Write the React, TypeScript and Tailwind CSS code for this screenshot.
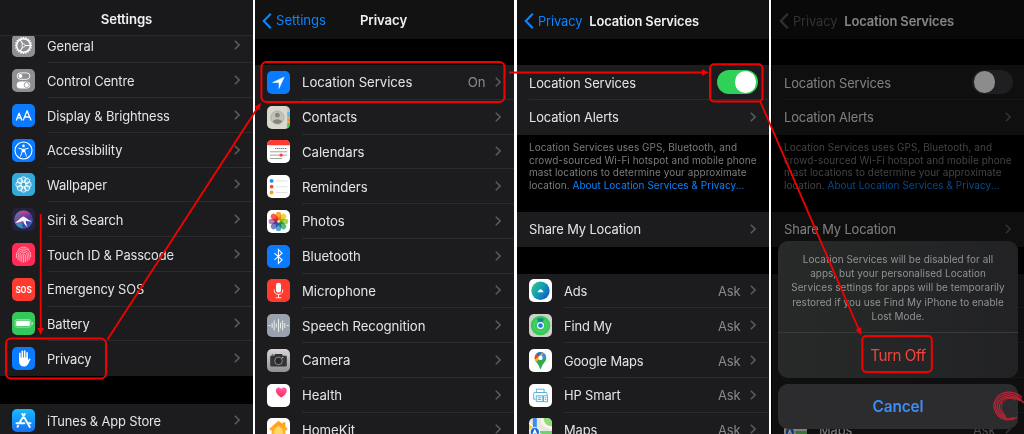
import type { ReactNode } from 'react';
import clsx from 'clsx';

interface RowProps {
  label: string;
  icon?: ReactNode;
  value?: string;
  last?: boolean;
  control?: ReactNode;
}

function Chevron() {
  return (
    <svg className="w-[6px] h-[10px] shrink-0" viewBox="0 0 6 10" fill="none" stroke="#5c5c60" strokeWidth="1.5">
      <path d="M.8.7 5.1 5 .8 9.3" />
    </svg>
  );
}

function Row({ label, icon, value, last, control }: RowProps) {
  return (
    <div className="flex h-[34.75px] shrink-0 items-stretch bg-[#1c1c1e] pl-3">
      {icon && <div className="flex w-[35px] shrink-0 items-center">{icon}</div>}
      <div className={clsx('flex flex-1 items-center border-b pr-[13.5px]', last ? 'border-transparent' : 'border-[#2b2b2d]')}>
        <span className="flex-1 whitespace-nowrap pt-[3px] text-[#e4e4e6]">{label}</span>
        {value && <span className="mr-[9px] pt-[3px] text-[#8a8a8e]">{value}</span>}
        {control || <Chevron />}
      </div>
    </div>
  );
}

function Tile({ bg, children }: { bg: string; children: ReactNode }) {
  return (
    <svg className={clsx('h-[23px] w-[23px] overflow-hidden rounded-[5px]', bg)} viewBox="0 0 23 23" fill="none">
      {children}
    </svg>
  );
}

const teeth = Array.from({ length: 20 }, (_, i) => i * 18);
const petals = ['#f99b1c', '#e8d31a', '#a3cc3a', '#3fb36b', '#3d9bd0', '#6a6fc0', '#b668ae', '#ee4c3c'];

const icons = {
  general: (
    <Tile bg="bg-[#8e8e93]">
      <g stroke="#fff">
        <circle cx="11.5" cy="11.5" r="6.8" strokeWidth="1.4" />
        {teeth.map((a) => (
          <path key={a} d="M11.5 2.9v1.6" strokeWidth="1.3" transform={`rotate(${a} 11.5 11.5)`} />
        ))}
        <circle cx="11.5" cy="11.5" r="1.6" strokeWidth=".9" />
        <path d="M13.1 11.5h5M10.7 10.1 8.2 5.8M10.7 12.9l-2.5 4.3" strokeWidth="1.1" />
      </g>
    </Tile>
  ),
  control: (
    <Tile bg="bg-[#8e8e93]">
      <rect x="5.1" y="3.9" width="12.8" height="6.4" rx="3.2" stroke="#fff" strokeWidth=".9" />
      <circle cx="8.4" cy="7.1" r="2" fill="#fff" />
      <rect x="4.7" y="12.4" width="13.6" height="7.2" rx="3.6" fill="#fff" />
      <circle cx="14.7" cy="16" r="2.6" fill="#fff" stroke="#8e8e93" strokeWidth=".8" />
    </Tile>
  ),
  display: (
    <Tile bg="bg-[#0a7aff]">
      <g stroke="#fff" strokeWidth="1.3" strokeLinecap="round" strokeLinejoin="round">
        <path d="m4.4 16 2.7-6.8L9.8 16M5.3 13.8h3.6M11.3 16l3.8-9.3L18.9 16M12.6 13h5" />
      </g>
    </Tile>
  ),
  accessibility: (
    <Tile bg="bg-[#0a7aff]">
      <circle cx="11.5" cy="11.5" r="8.5" stroke="#fff" strokeWidth="1.1" />
      <circle cx="11.5" cy="6.9" r="1.3" fill="#fff" />
      <path d="m6.8 9.3 3.3.8v2.7l-1.5 4.3M16.2 9.3l-3.3.8v2.7l1.5 4.3" stroke="#fff" strokeWidth="1" strokeLinecap="round" strokeLinejoin="round" />
      <path d="M10 9.7h3v3.5h-3z" fill="#fff" />
    </Tile>
  ),
  wallpaper: (
    <Tile bg="bg-[#34aadc]">
      <g stroke="#fff" strokeWidth=".85">
        {petals.map((p, i) => (
          <circle key={p} cx="11.5" cy="6.4" r="2.6" fill="#fff" fillOpacity=".15" transform={`rotate(${i * 45} 11.5 11.5)`} />
        ))}
        <circle cx="11.5" cy="11.5" r="2.3" />
      </g>
    </Tile>
  ),
  siri: (
    <Tile bg="bg-[#23233c]">
      <defs>
        <linearGradient id="siri" x1="0" y1="0" x2="1" y2="1">
          <stop offset="0" stopColor="#2b9bb0" />
          <stop offset=".4" stopColor="#8a3d94" />
          <stop offset=".65" stopColor="#4438a0" />
          <stop offset="1" stopColor="#2390c8" />
        </linearGradient>
      </defs>
      <circle cx="11.5" cy="11.5" r="9.3" fill="url(#siri)" />
      <path d="M4.5 6.500C8 1.500 15 1.800 18.200 6.500c-3-1.500-9-2-13.700 0z" fill="#d63d8b" fillOpacity=".75" />
      <path d="M2.8 14.500C6 13.500 8 9.500 11.500 8.500c2.500.8 4.500 3.800 8.300 4.800-2.500.5-4.500 0-6-.6.2 2.300.7 4.300 1.800 6-2.600-1-4-3.200-4.500-5.600-2 .8-4.800 2-8.300 1.400z" fill="#f3f4fc" />
      <path d="M3 15c2 3.500 4.500 5 8 5.500-.5-2-.5-4-.6-6.200-2 .7-4.400 1.500-7.400.7z" fill="#22b5c9" fillOpacity=".7" />
    </Tile>
  ),
  touchId: (
    <Tile bg="bg-[#ff2d55]">
      <g stroke="#ffc3cf" strokeWidth=".85" strokeLinecap="round">
        <path d="M6 6.700c3.200-3.500 8-3.500 11.100 0M4.400 11.500c.4-7.300 13.800-7.800 14.300 0v2.300M4.400 11.500v3M6.200 16.800v-5c.2-5.400 10.400-5.600 10.800 0v4.700M8 18v-6.200c.1-3.300 7-3.500 7.200 0V18M9.800 18.800v-6.600c.1-1.700 3.400-1.700 3.500 0v6.600M11.600 12.200v7" />
      </g>
    </Tile>
  ),
  battery: (
    <Tile bg="bg-[#34c759]">
      <rect x="3" y="7.6" width="16" height="7.6" rx="1.9" stroke="#a9e6b9" strokeWidth=".8" />
      <rect x="4.2" y="8.8" width="13.6" height="5.2" rx=".8" fill="#fff" />
      <path d="M20.3 10.200v2.400" stroke="#c9efd2" strokeWidth="1.1" />
    </Tile>
  ),
  privacy: (
    <Tile bg="bg-[#0a7aff]">
      <g stroke="#fff" strokeWidth="1.6" strokeLinecap="round">
        <path d="M7.900 12V6.200M10.300 11V4.300M12.700 11V4.100M15.100 12V5.700" />
      </g>
      <path d="M7.100 10.500h8.800v2.900l1-1.500c.7-.9 1.900-.4 1.500.6l-2.200 4.300c-.9 1.900-2.200 2.800-4.300 2.800-3.200 0-4.800-2.100-4.800-5z" fill="#fff" />
    </Tile>
  ),
  appStore: (
    <Tile bg="bg-linear-to-b from-[#1fb9fa] to-[#1a6ff0]">
      <g stroke="#fff" strokeWidth="1.9" strokeLinecap="round">
        <path d="m10.300 5 5.900 10.200M12.800 5 7.300 14.300M4.500 14.300h7.800M15.600 14.300h2.900M6.100 16.700l-.6 1M16.800 16.300l1 1.700" />
      </g>
    </Tile>
  ),
  location: (
    <Tile bg="bg-[#0a7aff]">
      <path d="M17.200 6 12 17.400v-5.900H5.700z" fill="#fff" stroke="#fff" strokeWidth=".5" strokeLinejoin="round" />
    </Tile>
  ),
  contacts: (
    <Tile bg="bg-[#d9d8ce]">
      <circle cx="10.4" cy="11.5" r="6.6" fill="#c4c2b8" stroke="#aaa9a1" strokeWidth=".8" />
      <circle cx="10.4" cy="9.2" r="2.4" fill="#85847e" />
      <path d="M5.700 15.800c.9-3.500 8.500-3.500 9.400 0a6.300 6.300 0 0 1-9.400 0z" fill="#85847e" />
      <path d="M20.200 0H23v6h-2.800z" fill="#c4c4be" />
      <path d="M20.200 6H23v5h-2.800z" fill="#5db8ea" />
      <path d="M20.200 11.500H23v5h-2.800z" fill="#ff9417" />
      <path d="M20.200 17H23v6h-2.800z" fill="#42c74c" />
    </Tile>
  ),
  calendar: (
    <Tile bg="bg-white">
      <path d="M0 0h23v5.200H0z" fill="#ff3b30" />
      <g stroke="#555" strokeWidth=".9" strokeDasharray="1.2 .8">
        <path d="M8.200 8.500h12M3.400 11.800h16.800M3.400 15.100h16.800M3.400 18.500h12" />
      </g>
      <circle cx="14.1" cy="15.1" r="1.7" fill="#ff3b30" />
    </Tile>
  ),
  reminders: (
    <Tile bg="bg-white">
      <circle cx="4.6" cy="5.9" r="1.9" fill="#1f87ff" />
      <circle cx="4.6" cy="11.7" r="1.9" fill="#ff453a" />
      <circle cx="4.6" cy="17.5" r="1.9" fill="#ff9f0a" />
      <path d="M8.800 5.900h11.500M8.800 11.700h11.500M8.800 17.500h11.500" stroke="#d4d4d6" strokeWidth=".7" />
    </Tile>
  ),
  photos: (
    <Tile bg="bg-white">
      {petals.map((fill, i) => (
        <rect key={fill} x="8.8" y="1.7" width="5.4" height="8.8" rx="2.7" fill={fill} fillOpacity=".88" transform={`rotate(${i * 45} 11.5 11.5)`} className="mix-blend-multiply" />
      ))}
    </Tile>
  ),
  bluetooth: (
    <Tile bg="bg-[#0a7aff]">
      <path d="m7.400 8.200 7.700 6.600-3.700 3.600V4.600l3.700 3.600-7.700 6.600" stroke="#fff" strokeWidth="1.1" />
    </Tile>
  ),
  microphone: (
    <Tile bg="bg-[#ff3b30]">
      <rect x="9" y="3.8" width="5" height="9.6" rx="2.5" fill="#fff" />
      <path d="M7.300 10.500v1.200c0 5 8.400 5 8.400 0v-1.200M11.500 15.500v3M8.700 18.700h5.600" stroke="#fff" strokeWidth=".9" />
    </Tile>
  ),
  speech: (
    <Tile bg="bg-[#9aa2ad]">
      <path d="M1.500 11.500h2M5.100 9v5M7.200 6.500v10M9.300 9.500v4M11.500 5v13M13.600 8.500v6M15.700 6.500v10M17.800 9v5M19.800 11.500h2" stroke="#eceef1" strokeWidth="1" />
    </Tile>
  ),
  camera: (
    <Tile bg="bg-linear-to-b from-[#d6d6d9] to-[#8f8f94]">
      <path d="M3.200 8c0-.8.500-1.200 1.200-1.200h2.700l1-1.700h6.800l1 1.700h2.700c.8 0 1.200.4 1.200 1.200v8.200c0 .8-.4 1.200-1.200 1.200H4.400c-.8 0-1.200-.4-1.200-1.200z" fill="#343438" />
      <path d="M4.700 5.400h1.900v1H4.700z" fill="#343438" />
      <circle cx="11.5" cy="11.9" r="3.8" fill="#28282b" stroke="#929298" strokeWidth=".9" />
      <circle cx="15.8" cy="8.5" r=".7" fill="#f8c51c" />
    </Tile>
  ),
  health: (
    <Tile bg="bg-white">
      <defs>
        <linearGradient id="heart" x1="0" y1="0" x2="0" y2="1">
          <stop offset="0" stopColor="#ff5fae" />
          <stop offset="1" stopColor="#ff2748" />
        </linearGradient>
      </defs>
      <path d="M14.300 13.600C6.500 8.800 8.300 3.600 11.600 3.600c1.300 0 2.200.6 2.700 1.500.5-.9 1.400-1.500 2.700-1.500 3.300 0 5.100 5.200-2.700 10z" fill="url(#heart)" />
    </Tile>
  ),
  homekit: (
    <Tile bg="bg-white">
      <defs>
        <linearGradient id="home" x1="0" y1="0" x2="0" y2="1">
          <stop offset="0" stopColor="#ff9a0b" />
          <stop offset="1" stopColor="#ffc93c" />
        </linearGradient>
      </defs>
      <path d="M11.500 3.200 3 10.600v1.200h2V19h13v-7.200h2v-1.200l-2-1.800V4.800h-2.200v2z" fill="url(#home)" stroke="#fb9a1b" strokeWidth=".7" strokeLinejoin="round" />
      <path d="m11.500 7.800-4 3.500v5.200h8v-5.200z" fill="#ffd66b" />
    </Tile>
  ),
  ads: (
    <Tile bg="bg-white">
      <defs>
        <linearGradient id="ads" x1="0" y1=".1" x2="1" y2=".8">
          <stop offset="0" stopColor="#35c786" />
          <stop offset=".5" stopColor="#119cb4" />
          <stop offset="1" stopColor="#1458c9" />
        </linearGradient>
      </defs>
      <circle cx="11.5" cy="11.7" r="9.2" fill="url(#ads)" />
      <path d="M8.500 13.200c1-1.700 2-3 3.100-3s2 1.300 3 3z" fill="#fff" />
    </Tile>
  ),
  findMy: (
    <Tile bg="bg-[#cfd1cf]">
      <circle cx="11.5" cy="11.5" r="9.8" fill="#35cb55" />
      <circle cx="11.5" cy="11.5" r="6.3" stroke="#5fe07a" strokeWidth=".6" />
      <path d="M8 4.700c2.300-1 4.700-1 7 0L13.300 9H9.700z" fill="#168a8f" />
      <circle cx="11.5" cy="11.5" r="3.5" fill="#fff" />
      <circle cx="11.5" cy="11.5" r="2.3" fill="#1a72f5" />
    </Tile>
  ),
  googleMaps: (
    <Tile bg="bg-white">
      <path d="M11.500 20c-.9 0-.8-2.300-2.200-4.300-1.300-1.900-3.600-3.700-3.600-6.800a5.800 5.800 0 0 1 11.600 0c0 3.100-2.300 4.900-3.600 6.800-1.400 2-1.300 4.300-2.200 4.300z" fill="#34a853" />
      <path d="m7.100 12.900 8.700-8.200A5.800 5.800 0 0 0 7 5.200L5.700 8.900c0 1.600.6 2.900 1.400 4z" fill="#fbbc04" />
      <path d="m7.100 5.100 3 2.500-4.200 2.900c-.5-2-.1-3.800 1.200-5.400z" fill="#ea4335" />
      <path d="M7.100 5.100a5.800 5.800 0 0 1 6.200-1.700L9.700 7.600z" fill="#1a73e8" />
      <path d="M13.300 3.400c1.700.5 3 1.700 3.600 3.300l-5.200 5.800 1.500-5z" fill="#4285f4" />
      <circle cx="11.5" cy="8.9" r="2.2" fill="#fff" />
    </Tile>
  ),
  hpSmart: (
    <Tile bg="bg-white">
      <g stroke="#45abd2" strokeWidth=".9">
        <path d="M7.400 8.500V5.200h7.700v3.300M6.500 15.200H4.700V9.300c0-.5.3-.8.800-.8h11.700c.5 0 .8.300.8.800v1.700M7.300 11.800h6.500v5.800H7.300zM14.500 11.800h4v6h-4zM8.800 13.700h3.400M8.800 15.500h3.400M15.800 13.800h1.500M15.800 15.600h1.500" />
      </g>
    </Tile>
  ),
  maps: (
    <Tile bg="bg-[#e9e7d7]">
      <path d="M12 0h11v11C16 11 12 6 12 0z" fill="#90dc79" />
      <path d="M13 0c0 6 4 9.800 10 9.800" stroke="#f6f6ef" strokeWidth="3" />
      <path d="M0 4.500 23 20v3h-8L0 13z" fill="#fff" />
      <path d="M0 6v5l14 12h5z" fill="#fccc2d" />
      <path d="M11 15l12 8V13H11z" fill="#72cf6f" />
      <path d="M3.800 0h4v23h-4z" fill="#3e8cf3" />
      <circle cx="5.8" cy="14" r="4.7" fill="#1d6ce0" stroke="#fff" strokeWidth=".9" />
      <path d="m5.800 10.600 2.600 6.100-2.600-1.400-2.600 1.400z" fill="#fff" />
    </Tile>
  ),
};

const sosIcon = (
  <span className="flex h-[23px] w-[23px] items-center justify-center rounded-[5px] bg-[#ff3b30] pt-px font-['Roboto',sans-serif] text-[8.5px] font-bold tracking-[-0.1px] text-white">
    SOS
  </span>
);

const settingsRows = [
  { label: 'General', icon: icons.general },
  { label: 'Control Centre', icon: icons.control },
  { label: 'Display & Brightness', icon: icons.display },
  { label: 'Accessibility', icon: icons.accessibility },
  { label: 'Wallpaper', icon: icons.wallpaper },
  { label: 'Siri & Search', icon: icons.siri },
  { label: 'Touch ID & Passcode', icon: icons.touchId },
  { label: 'Emergency SOS', icon: sosIcon },
  { label: 'Battery', icon: icons.battery },
  { label: 'Privacy', icon: icons.privacy, last: true },
];

const privacyRows = [
  { label: 'Location Services', icon: icons.location, value: 'On' },
  { label: 'Contacts', icon: icons.contacts },
  { label: 'Calendars', icon: icons.calendar },
  { label: 'Reminders', icon: icons.reminders },
  { label: 'Photos', icon: icons.photos },
  { label: 'Bluetooth', icon: icons.bluetooth },
  { label: 'Microphone', icon: icons.microphone },
  { label: 'Speech Recognition', icon: icons.speech },
  { label: 'Camera', icon: icons.camera },
  { label: 'Health', icon: icons.health },
  { label: 'HomeKit', icon: icons.homekit },
];

const appRows = [
  { label: 'Ads', icon: icons.ads },
  { label: 'Find My', icon: icons.findMy },
  { label: 'Google Maps', icon: icons.googleMaps },
  { label: 'HP Smart', icon: icons.hpSmart },
  { label: 'Maps', icon: icons.maps },
];

function BackHeader({ back, title, grey, className }: { back: string; title: string; grey?: boolean; className?: string }) {
  return (
    <div className={clsx('flex h-[38.5px] shrink-0 items-center bg-[#121213] pt-[4px]', className)}>
      <div className={clsx('flex items-center gap-[4px]', grey ? 'text-[#5a5a5c]' : 'text-[#0a84ff]')}>
        <svg className="h-[16px] w-[10px]" viewBox="0 0 10 16" fill="none" stroke="currentColor" strokeWidth="2.2">
          <path d="M8.800.8 1.800 8l7 7.200" />
        </svg>
        <span>{back}</span>
      </div>
      <span className="whitespace-nowrap font-semibold text-[#f0f0f2]">{title}</span>
    </div>
  );
}

function Toggle({ on }: { on?: boolean }) {
  return (
    <div className={clsx('-mr-[2px] flex h-[24.5px] w-[40.5px] items-center rounded-full px-[1.5px]', on ? 'justify-end bg-[#30d158]' : 'bg-[#39393d]')}>
      <div className="h-[21.5px] w-[21.5px] rounded-full bg-white" />
    </div>
  );
}

function LocationServices({ on }: { on?: boolean }) {
  return (
    <>
      <BackHeader back="Privacy" title="Location Services" grey={!on} className="gap-[7px] pl-[7px]" />
      <div className="h-[26.5px] shrink-0" />
      <Row label="Location Services" control={<Toggle on={on} />} />
      <Row label="Location Alerts" last />
      <p className="h-[77.3px] shrink-0 whitespace-nowrap pl-3 pt-[6.5px] text-[9.95px] leading-[12.6px] tracking-[0.06px] text-[#7c7c80]">
        Location Services uses GPS, Bluetooth, and
        <br />
        crowd-sourced Wi-Fi hotspot and mobile phone
        <br />
        mast locations to determine your approximate
        <br />
        location. <span className="text-[#0a84ff]">About Location Services &amp; Privacy...</span>
      </p>
      <Row label="Share My Location" last />
      <div className="h-[27px] shrink-0" />
      {appRows.map((row) => (
        <Row key={row.label} {...row} value="Ask" />
      ))}
    </>
  );
}

// red boxes and arrows that walk through the steps
function Annotations() {
  return (
    <svg className="pointer-events-none absolute inset-0 h-[434px] w-[1024px]" viewBox="0 0 1024 434" fill="none">
      <g stroke="#f50000" strokeWidth="2">
        <rect x="6" y="338.6" width="100" height="40" rx="5" />
        <rect x="261.4" y="62" width="243" height="40" rx="5" />
        <rect x="710" y="64.2" width="52.5" height="37.3" rx="4" />
        <rect x="862.3" y="336" width="69.5" height="36" rx="4" />
        <path d="M40.700 214v116M107.500 339.500 257.600 107.800M509 72.500h194M760.500 102l98.300 227.500" strokeWidth="1.8" />
      </g>
      <g fill="#f50000">
        <path d="M37.500 328h6.400l-3.200 7z" />
        <path d="m261 102.800-1.300 7.500-5.200-3.400z" />
        <path d="M702 69.300v6.400l7-3.200z" />
        <path d="m861.200 335-5.600-5.200 5.700-2.500z" />
      </g>
    </svg>
  );
}

function SwirlLogo() {
  return (
    <svg className="absolute left-[221px] top-[390px] h-[32px] w-[32px]" viewBox="0 0 32 32" fill="none" stroke="#b82433" strokeLinecap="round">
      <path d="M29.500 7C22 .2 9 .2 3.500 9.500c-4.500 8.800 1.500 18.700 11 20.300 3.800.6 7.500-.3 10-2.300" strokeWidth="1.2" />
      <path d="M29 9.200C22 2 10.500 2 5.200 10c-4.500 8 .8 17 9.300 18.500 3 .4 5.500 0 7.500-1" strokeWidth="1.2" />
      <path d="M31.500 12.500C23 3.800 12 4 7 10.800c-4.300 7 .3 14.700 7 16.500" strokeWidth="1.3" />
      <path d="M27.500 10.500C20.500 5.500 12.500 6 8.800 11.800c-3.300 5.700-.5 11.700 4.200 14" strokeWidth="1.3" />
      <path d="M23.500 10C18.500 7 13 8 10.300 13c-2.300 4.500-.7 8.500 2 11" strokeWidth="1" />
    </svg>
  );
}

export default function App() {
  return (
    <div className="relative flex h-[434px] w-[1024px] overflow-hidden bg-white font-['Inter',sans-serif] text-[12.9px] leading-[1.2] tracking-[-0.12px]">
      <div className="flex w-[253px] shrink-0 flex-col overflow-hidden bg-black">
        <div className="flex h-[36px] shrink-0 items-center justify-center border-b border-[#29292b] bg-[#19191b] pt-[4px]">
          <span className="text-[13.2px] font-semibold text-[#f0f0f2]">Settings</span>
        </div>
        {/* scrolled list, first row is cut by the header */}
        <div className="flex h-[340px] shrink-0 flex-col justify-end overflow-hidden">
          {settingsRows.map((row) => (
            <Row key={row.label} {...row} />
          ))}
        </div>
        <div className="h-[27.5px] shrink-0" />
        <Row label="iTunes & App Store" icon={icons.appStore} />
      </div>

      <div className="ml-[2px] flex w-[259px] shrink-0 flex-col overflow-hidden bg-black text-[13.2px] tracking-[-0.07px]">
        <BackHeader back="Settings" title="Privacy" className="gap-[34px] pl-[7px]" />
        <div className="h-[26.5px] shrink-0" />
        {privacyRows.map((row) => (
          <Row key={row.label} {...row} />
        ))}
      </div>

      <div className="ml-[3px] flex w-[252px] shrink-0 flex-col overflow-hidden bg-black">
        <LocationServices on />
      </div>

      <div className="relative ml-[2px] flex w-[253px] shrink-0 flex-col overflow-hidden bg-black pl-[1px]">
        <LocationServices />
        <div className="absolute inset-0 bg-black/45" />
        <div className="absolute left-[7px] top-[241px] flex w-[240px] flex-col gap-[6px]">
          <div className="flex h-[137px] flex-col rounded-[10px] bg-linear-to-r from-[#272a29] to-[#222224] text-center">
            <p className="h-[92px] whitespace-nowrap border-b border-[#3a3b3c] pt-[11px] text-[9.95px] leading-[14.2px] tracking-[0.05px] text-[#919294]">
              Location Services will be disabled for all
              <br />
              apps, but your personalised Location
              <br />
              Services settings for apps will be temporarily
              <br />
              restored if you use Find My iPhone to enable
              <br />
              Lost Mode.
            </p>
            <span className="flex flex-1 items-center justify-center pt-[2px] text-[15.2px] tracking-[-0.45px] text-[#f0443b]">Turn Off</span>
          </div>
          <div className="flex h-[45px] items-center justify-center rounded-[10px] bg-[#2c2c2e] pt-px text-[15.4px] font-semibold tracking-[-0.15px] text-[#3f8df5]">
            Cancel
          </div>
        </div>
        <SwirlLogo />
      </div>

      <Annotations />
    </div>
  );
}
